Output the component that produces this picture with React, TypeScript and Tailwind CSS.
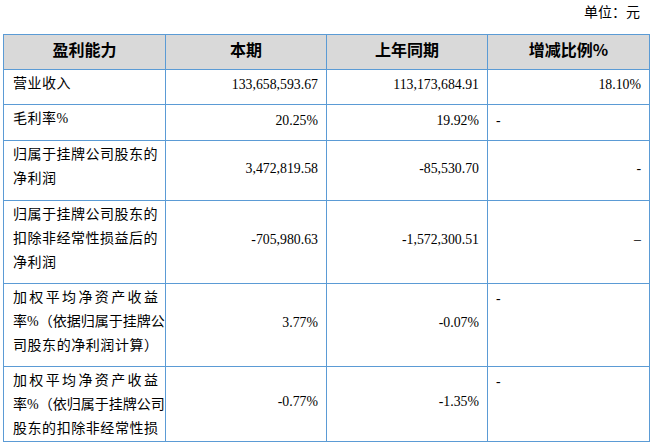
const rows = [
  { label: ["营业收入"], cur: "133,658,593.67", prev: "113,173,684.91", change: "18.10%", changePos: "right", h: "h-[35px]" },
  { label: ["毛利率%"], cur: "20.25%", prev: "19.92%", change: "-", changePos: "left", h: "h-[36px]" },
  { label: ["归属于挂牌公司股东的", "净利润"], cur: "3,472,819.58", prev: "-85,530.70", change: "-", changePos: "right", h: "h-[60px]" },
  {
    label: ["归属于挂牌公司股东的", "扣除非经常性损益后的", "净利润"],
    cur: "-705,980.63",
    prev: "-1,572,300.51",
    change: "–",
    changePos: "right",
    h: "h-[83px]",
  },
  {
    label: ["加权平均净资产收益", "率%（依据归属于挂牌公", "司股东的净利润计算）"],
    cur: "3.77%",
    prev: "-0.07%",
    change: "-",
    changePos: "top",
    h: "h-[83px]",
    justify: true,
  },
  {
    label: ["加权平均净资产收益", "率%（依归属于挂牌公司", "股东的扣除非经常性损"],
    cur: "-0.77%",
    prev: "-1.35%",
    change: "-",
    changePos: "top",
    h: "h-[73px]",
    justify: true,
  },
];

const cell = "border border-[#5b9bd5] p-0";

const App = () => {
  return (
    <div
      lang="zh-CN"
      className="w-[651px] h-[444px] overflow-hidden bg-white text-black"
      style={{ fontFamily: '"Liberation Serif", "Noto Sans CJK SC", serif' }}
    >
      <div className="h-[34px] pr-[11px] pt-[3px] text-right text-[14px] leading-[20px]">单位：元</div>

      <table className="ml-[3px] w-[646px] table-fixed border-collapse">
        <colgroup>
          <col className="w-[162px]" />
          <col className="w-[161px]" />
          <col className="w-[161px]" />
          <col className="w-[162px]" />
        </colgroup>
        <thead>
          <tr className="h-[35px] bg-[#d9d9d9]">
            {["盈利能力", "本期", "上年同期", "增减比例%"].map((t) => (
              <th key={t} className={`${cell} pb-[4px] text-center align-middle text-[16px] font-bold`}>
                <span style={{ fontFamily: '"Noto Sans CJK SC", sans-serif' }}>{t}</span>
              </th>
            ))}
          </tr>
        </thead>
        <tbody>
          {rows.map((r, i) => (
            <tr key={i} className={r.h}>
              <td className={`${cell} pl-[9px] pr-[4px] pt-[2px] align-top text-[14px] leading-[24px]`}>
                {r.label.map((line, j) => (
                  <div
                    key={j}
                    className={`whitespace-nowrap ${
                      r.justify ? "w-[145px] text-justify [text-align-last:justify]" : "tracking-[0.5px]"
                    }`}
                  >
                    {line}
                  </div>
                ))}
              </td>
              <td className={`${cell} pr-[8px] pb-[3px] text-right align-middle text-[13.8px]`}>{r.cur}</td>
              <td className={`${cell} pr-[8px] pb-[3px] text-right align-middle text-[13.8px]`}>{r.prev}</td>
              {r.changePos === "top" ? (
                <td className={`${cell} pl-[8px] pt-[3px] align-top text-[13.8px] leading-[24px]`}>{r.change}</td>
              ) : (
                <td
                  className={`${cell} pb-[3px] align-middle text-[13.8px] ${
                    r.changePos === "right" ? "pr-[8px] text-right" : "pl-[8px] text-left"
                  }`}
                >
                  {r.change}
                </td>
              )}
            </tr>
          ))}
        </tbody>
      </table>
    </div>
  );
};

export default App;
